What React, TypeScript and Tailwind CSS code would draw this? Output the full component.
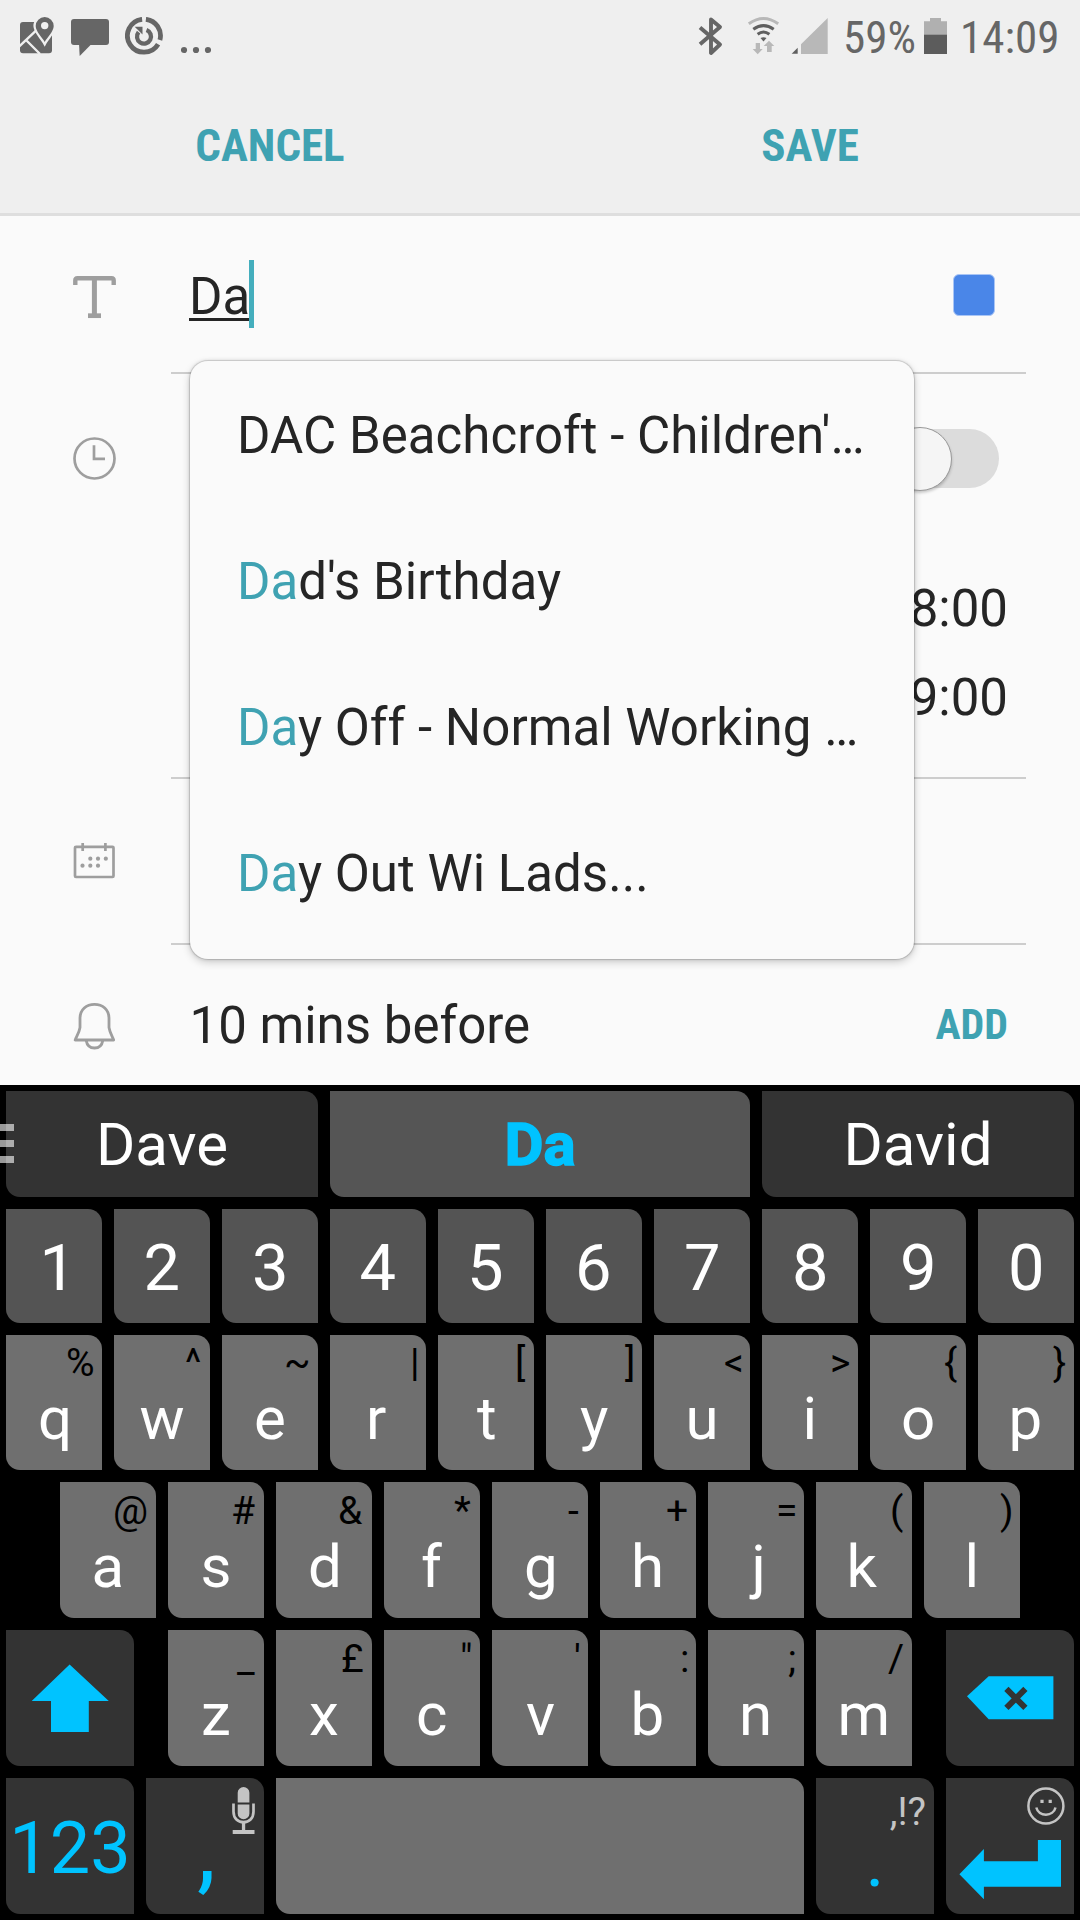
import { clsx } from 'clsx';

// Letter keys: [main glyph, long-press glyph]
const topRow = [['q', '%'], ['w', '^'], ['e', '~'], ['r', '|'], ['t', '['], ['y', ']'], ['u', '<'], ['i', '>'], ['o', '{'], ['p', '}']];
const homeRow = [['a', '@'], ['s', '#'], ['d', '&'], ['f', '*'], ['g', '-'], ['h', '+'], ['j', '='], ['k', '('], ['l', ')']];
const bottomRow = [['z', '_'], ['x', '£'], ['c', '"'], ['v', "'"], ['b', ':'], ['n', ';'], ['m', '/']];
const numbers = ['1', '2', '3', '4', '5', '6', '7', '8', '9', '0'];

const suggestions = [
  { match: '', rest: "DAC Beachcroft - Children'…" },
  { match: 'Da', rest: "d's Birthday" },
  { match: 'Da', rest: 'y Off - Normal Working …' },
  { match: 'Da', rest: 'y Out Wi Lads...' },
];

const measureCtx = document.createElement('canvas').getContext('2d')!;

// Side bearings differ per glyph, so keys are aligned on the drawn shape
function inkOffset(text: string, font: string, align: 'center' | 'right') {
  measureCtx.font = font;
  const m = measureCtx.measureText(text);
  if (align === 'right') return m.width - m.actualBoundingBoxRight;
  return m.width / 2 - (m.actualBoundingBoxRight - m.actualBoundingBoxLeft) / 2;
}

interface GlyphProps {
  text: string;
  font: string;
  align?: 'center' | 'right';
  className?: string;
}

function Glyph({ text, font, align = 'center', className }: GlyphProps) {
  return (
    <span
      className={clsx('block whitespace-pre', className)}
      style={{ transform: `translateX(${inkOffset(text, font, align)}px)` }}
    >
      {text}
    </span>
  );
}

interface KeyProps {
  className?: string;
  children?: React.ReactNode;
}

function Key({ className, children }: KeyProps) {
  return (
    <div className={clsx('relative flex justify-center rounded-tr-[14px] rounded-bl-[14px]', className)}>
      {children}
    </div>
  );
}

function LetterKey({ main, hint }: { main: string; hint: string }) {
  return (
    <Key className="h-full w-24 flex-col justify-end bg-[#6f6f6f] pb-6">
      <Glyph
        text={hint}
        font="39px Roboto"
        align="right"
        className="mr-[9px] -mb-px self-end text-[39px] leading-[57px] text-black"
      />
      <Glyph text={main} font="60px Roboto" className="self-center text-[60px] leading-[55px] text-white" />
    </Key>
  );
}

function StatusBar() {
  return (
    <div className="flex h-[76px] items-center pr-[22px] pl-5 font-['Roboto_Condensed',sans-serif] text-[45px] text-[#666]">
      {/* Map */}
      <svg className="overflow-visible" width="34" height="42" viewBox="0 0 34 42">
        <rect y="5" width="32" height="31.3" rx="3" fill="#666" />
        <path d="M-1 29.6 L16 13.6 M6.5 23.5 L20 37" stroke="#efefef" strokeWidth="2.4" fill="none" />
        <path
          d="M24.7 25 C22 20 15.7 14.5 15.7 9 a9 9 0 0 1 18 0 C33.7 14.5 27.4 20 24.7 25z"
          fill="#666"
          stroke="#efefef"
          strokeWidth="4.6"
          paintOrder="stroke"
        />
        <circle cx="24.7" cy="8.6" r="3.7" fill="#efefef" />
      </svg>
      {/* Message */}
      <svg className="ml-[17px]" width="38" height="42" viewBox="0 0 38 42" fill="#666">
        <rect y="2" width="38" height="26" rx="3" />
        <path d="M8 27 H20.5 L8.7 39z" />
      </svg>
      {/* Sync */}
      <svg className="ml-4" width="38" height="42" viewBox="0 0 38 42" fill="none" stroke="#666">
        <path d="M20.9 2.3 A16.5 16.5 0 0 1 34.9 23 M33.1 27.2 A16.5 16.5 0 1 1 17.1 2.3" strokeWidth="4.8" />
        <path d="M21.5 13.1 A7 7 0 1 1 13.6 15.2" strokeWidth="4.3" />
        <path d="M9.7 9.7 H17.5 V17.5z" fill="#666" stroke="none" />
      </svg>
      <svg className="ml-[18px]" width="30" height="42" viewBox="0 0 30 42" fill="#666">
        <circle cx="3" cy="33" r="3.1" />
        <circle cx="15" cy="33" r="3.1" />
        <circle cx="27" cy="33" r="3.1" />
      </svg>

      {/* Bluetooth */}
      <svg className="ml-auto" width="26" height="42" viewBox="0 0 26 42" fill="none" stroke="#666">
        <path d="M2 10.5 L22 27.5 L13 36 V2.5 L22 10 L2 27.3" strokeWidth="3.9" strokeLinejoin="round" />
      </svg>
      {/* Wifi */}
      <svg className="ml-[23px] overflow-visible" width="34" height="42" viewBox="0 0 34 42" fill="none" stroke="#5f5f5f" strokeWidth="3">
        <path d="M1.8 6.8 Q16.5 -3.8 31.2 6.8" stroke="#b8b8b8" />
        <path d="M6.3 12.2 Q16.5 5 26.7 12.2 M10.6 17.2 Q16.5 12.8 22.4 17.2" />
        <path d="M13.5 21 Q16.5 19.3 19.5 21 L16.5 24.5z" fill="#5f5f5f" stroke="none" />
        <path d="M8.7 26 H13 V32 H15.7 L10.7 37.3 L5.7 32 H8.7z M20 35 V29 H16.7 L22 23.7 L27.3 29 H24.7 V35z" fill="#b8b8b8" stroke="none" />
      </svg>
      {/* Signal */}
      <svg className="ml-[10px]" width="38" height="42" viewBox="0 0 38 42">
        <path d="M10 37 V27.3 L36.7 1 V37z" fill="#b8b8b8" />
        <path d="M.7 36.7 L6.7 30.7 V36.7z" fill="#5f5f5f" />
      </svg>
      <span className="ml-[14px] w-[73px]">59%</span>
      {/* Battery */}
      <svg className="ml-2" width="23" height="42" viewBox="0 0 23 42">
        <path d="M6 1 H17 V4.3 H23 V18 H0 V4.3 H6z" fill="#b0b0b0" />
        <rect y="17.7" width="23" height="19.3" fill="#5c5c5c" />
      </svg>
      <span className="ml-[13px] w-[98px]">14:09</span>
    </div>
  );
}

function TitleIcon() {
  return (
    <svg width="43" height="43" viewBox="0 0 43 43" fill="none" stroke="#9e9e9e">
      <path d="M2.3 9 V4.5 Q2.3 2.2 4.5 2.2 H38.5 Q40.7 2.2 40.7 4.5 V9" strokeWidth="4.4" />
      <path d="M21.4 2 V40" strokeWidth="5" />
      <path d="M15 39.7 H28" strokeWidth="4.7" />
    </svg>
  );
}

function ClockIcon() {
  return (
    <svg width="43" height="43" viewBox="0 0 43 43" fill="none" stroke="#9e9e9e" strokeWidth="2.7">
      <circle cx="21.5" cy="21.5" r="20" />
      <path d="M21 8.3 V21.9 H32" />
    </svg>
  );
}

function CalendarIcon() {
  return (
    <svg width="43" height="36" viewBox="0 0 43 36" fill="none" stroke="#9e9e9e" strokeWidth="2.7">
      <rect x="2" y="3.8" width="38.5" height="30.2" rx="1" />
      <path d="M9.7 0 V8 M32.4 0 V8" />
      <g fill="#9e9e9e" stroke="none">
        <circle cx="17.3" cy="15.7" r="2.1" />
        <circle cx="25" cy="15.7" r="2.1" />
        <circle cx="32.8" cy="15.7" r="2.1" />
        <circle cx="9.5" cy="22.7" r="2.1" />
        <circle cx="17.3" cy="22.7" r="2.1" />
        <circle cx="25" cy="22.7" r="2.1" />
      </g>
    </svg>
  );
}

function BellIcon() {
  return (
    <svg width="43" height="48" viewBox="0 0 43 48" fill="none" stroke="#9e9e9e" strokeWidth="2.8" strokeLinejoin="round">
      <path d="M2.2 38 H40.7 C39 33.5 36.8 30.5 36 25.5 V16.5 C36 7.5 29.5 2.4 21.5 2.4 S7 7.5 7 16.5 V25.5 C6.2 30.5 3.9 33.5 2.2 38z" />
      <path d="M13.2 38.5 C14 43.5 17.5 46 21.5 46 S29 43.5 29.8 38.5" />
    </svg>
  );
}

function IconCell({ children }: { children: React.ReactNode }) {
  return <div className="flex w-[171px] shrink-0 items-center pl-[73px]">{children}</div>;
}

function EventForm() {
  return (
    <main className="relative h-[869px] bg-[#fafafa] text-[51px] text-[#252525]">
      {/* Title */}
      <div className="flex h-[158px]">
        <IconCell>
          <div className="pt-[5px]"><TitleIcon /></div>
        </IconCell>
        <div className="mr-[54px] flex flex-1 items-center border-b-2 border-[#cdcdcd] pr-[31px] pl-[18px]">
          <span className="pt-[5px] leading-[60px] underline decoration-[3px] underline-offset-[4px]">Da</span>
          <span className="-ml-px h-[68px] w-[5px] bg-[#44aebd]" />
          <span className="mt-[2px] ml-auto h-[42px] w-[42px] rounded-md border border-[#a9c5f5] bg-[#4a86e8]" />
        </div>
      </div>

      {/* Time */}
      <div className="flex h-[405px]">
        <IconCell>
          <div className="mb-[237px]"><ClockIcon /></div>
        </IconCell>
        <div className="mr-[54px] flex flex-1 flex-col items-end border-b-2 border-[#cdcdcd] pr-[18px]">
          <div className="mr-[9px] flex h-[168px] items-center">
            <div className="flex h-[59px] w-[111px] items-center rounded-full bg-[#dcdcdc]">
              <span className="mt-px h-[64px] w-[64px] shrink-0 rounded-full border border-[#999] bg-[#f5f5f5] shadow-[0_2px_3px_rgba(0,0,0,0.2)]" />
            </div>
          </div>
          <div className="pt-[22px] text-right leading-[89px]">
            <div>18:00</div>
            <div>19:00</div>
          </div>
        </div>
      </div>

      {/* Calendar */}
      <div className="flex h-[166px]">
        <IconCell>
          <div className="pb-[2px]"><CalendarIcon /></div>
        </IconCell>
        <div className="mr-[54px] flex-1 border-b-2 border-[#cdcdcd]" />
      </div>

      {/* Reminder */}
      <div className="flex h-[140px] items-center pt-[21px]">
        <IconCell><BellIcon /></IconCell>
        <span className="pt-[2px] pl-[18.5px]">10 mins before</span>
        <span className="mr-[72px] mb-[2px] ml-auto font-['Roboto_Condensed',sans-serif] text-[42px] font-bold text-[#3fa2b2]">ADD</span>
      </div>

      {/* Autocomplete dropdown */}
      <ul className="absolute top-[145px] left-[190px] h-[598px] w-[724px] rounded-[18px] bg-[#fafafa] pt-[2px] pl-[47px] tracking-[0.03px] shadow-[0_0_0_1px_rgba(0,0,0,0.1),0_0_3px_1px_rgba(0,0,0,0.1),0_3px_8px_rgba(0,0,0,0.2)]">
        {suggestions.map((item) => (
          <li key={item.rest} className="h-[146px] leading-[146px] whitespace-nowrap">
            <span className="text-[#3fa2b2]">{item.match}</span>{item.rest}
          </li>
        ))}
      </ul>
    </main>
  );
}

function Keyboard() {
  return (
    <div className="flex h-[835px] flex-col gap-3 bg-black p-1.5">
      {/* Word predictions */}
      <div className="relative flex h-[106px] gap-3 text-[60px] leading-[107px] text-white">
        <Key className="w-[312px] bg-[#333]">Dave</Key>
        <Key className="w-[420px] bg-[#555] font-bold text-[#00c3ff] [-webkit-text-stroke:1.5px_#00c3ff]">Da</Key>
        <Key className="w-[312px] bg-[#333]">David</Key>
        <div className="absolute top-[33px] -left-1.5 flex flex-col gap-[9px]">
          <span className="h-[7px] w-[14px] bg-white/60" />
          <span className="h-[7px] w-[14px] bg-white/60" />
          <span className="h-[7px] w-[14px] bg-white/60" />
        </div>
      </div>

      <div className="flex h-[114px] gap-3">
        {numbers.map((n) => (
          <Key key={n} className="w-24 items-center bg-[#545454] pt-1">
            <Glyph text={n} font="65px Roboto" className="text-[65px] leading-none text-white" />
          </Key>
        ))}
      </div>

      <div className="flex h-[135px] gap-3">
        {topRow.map(([main, hint]) => <LetterKey key={main} main={main} hint={hint} />)}
      </div>

      <div className="flex h-[136px] justify-center gap-3">
        {homeRow.map(([main, hint]) => <LetterKey key={main} main={main} hint={hint} />)}
      </div>

      <div className="flex h-[136px] justify-between">
        <Key className="w-32 bg-[#333]">
          <svg width="128" height="136" viewBox="0 0 128 136" fill="#00c3ff">
            <path d="M63.6 34.5 L102.8 71 H82.8 V102 H45 V71 H25.7z" />
          </svg>
        </Key>
        <div className="flex gap-3">
          {bottomRow.map(([main, hint]) => <LetterKey key={main} main={main} hint={hint} />)}
        </div>
        <Key className="w-32 bg-[#333]">
          <svg width="128" height="136" viewBox="0 0 128 136">
            <path d="M21 66.3 L42.7 46.3 H107.4 V89.3 H42.7z" fill="#00c3ff" />
            <path d="M60.4 58.8 L79.4 77.8 M79.4 58.8 L60.4 77.8" stroke="#333" strokeWidth="6" />
          </svg>
        </Key>
      </div>

      <div className="flex h-[136px] gap-3 text-[#00c3ff]">
        <Key className="w-32 items-center bg-[#333] pt-[5px] text-[72px]">123</Key>
        <Key className="w-[118px] items-center bg-[#333] pt-[3px]">
          <svg className="absolute top-[9px] right-[9px]" width="23" height="48" viewBox="0 0 23 48" fill="#c4c4c4">
            <path d="M5.7 15.5 V5.7 a5.85 5.7 0 0 1 11.7 0 V15.5z M5.7 17.5 H17.4 V26.5 a5.85 5.7 0 0 1 -11.7 0z" />
            <path d="M1.5 16.5 V24.5 C1.5 31.5 6 35.2 11.5 35.2 S21.5 31.5 21.5 24.5 V16.5" fill="none" stroke="#c4c4c4" strokeWidth="2.7" />
            <path d="M9.9 35 H13.2 V43 H22.5 V47 H.7 V43 H9.9z" />
          </svg>
          <Glyph text="," font="96px Roboto" className="text-[96px] leading-none" />
        </Key>
        <Key className="w-[528px] bg-[#6f6f6f]" />
        <Key className="w-[118px] items-center bg-[#333] pt-[31px]">
          <span className="absolute top-3 right-2 text-[39px] leading-[45px] text-[#c4c4c4]">,!?</span>
          <Glyph text="." font="72px Roboto" className="text-[72px] leading-none" />
        </Key>
        <Key className="w-32 bg-[#333]">
          <svg width="128" height="136" viewBox="0 0 128 136">
            <g fill="none" stroke="#c4c4c4" strokeWidth="2.5">
              <circle cx="99.9" cy="28" r="17.5" />
              <path d="M90.3 29.5 C92.5 39 107.5 39 109.5 29.5" />
            </g>
            <path d="M94.4 21.7 h3.2 v3.2 h-3.2z M102.6 21.7 h3.2 v3.2 h-3.2z" fill="#c4c4c4" />
            <path d="M13.4 96.3 L37.9 71 V83.3 H91.9 V62 H115 V108.7 H37.9 V121.3z" fill="#00c3ff" />
          </svg>
        </Key>
      </div>
    </div>
  );
}

export default function App() {
  return (
    <div className="h-[1920px] w-[1080px] overflow-hidden bg-black font-['Roboto',sans-serif]">
      <header className="h-[216px] border-b-3 border-[#dedede] bg-[#efefef]">
        <StatusBar />
        <div className="flex h-[137px] items-center pt-[3px] text-center font-['Roboto_Condensed',sans-serif] text-[45px] font-bold text-[#3fa2b2]">
          <span className="flex-1">CANCEL</span>
          <span className="flex-1">SAVE</span>
        </div>
      </header>
      <EventForm />
      <Keyboard />
    </div>
  );
}
